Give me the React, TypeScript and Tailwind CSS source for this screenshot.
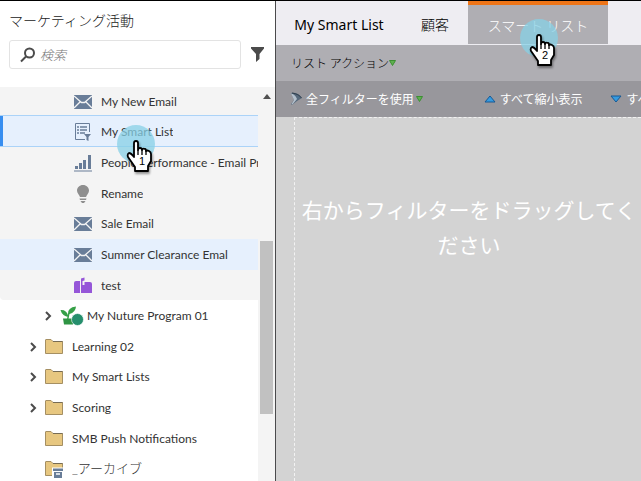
import React from "react";

type IconKind = "mail" | "list" | "chart" | "bulb" | "test" | "plant" | "folder" | "archive";

type Item = {
  label: string;
  icon: IconKind;
  depth: 1 | 2 | 3;
  expandable?: boolean;
  tight?: boolean;
  highlighted?: boolean;
  selected?: boolean;
};

const openItems: Item[] = [
  { label: "My Smart List", icon: "list", depth: 3, selected: true },
  { label: "People Performance - Email Programs", icon: "chart", depth: 3 },
  { label: "Rename", icon: "bulb", depth: 3, tight: true },
  { label: "Sale Email", icon: "mail", depth: 3 },
  { label: "Summer Clearance Emal", icon: "mail", depth: 3, highlighted: true },
  { label: "test", icon: "test", depth: 3, tight: true },
];

const otherItems: Item[] = [
  { label: "My Nuture Program 01", icon: "plant", depth: 2, expandable: true },
  { label: "Learning 02", icon: "folder", depth: 1, expandable: true, tight: true },
  { label: "My Smart Lists", icon: "folder", depth: 1, expandable: true },
  { label: "Scoring", icon: "folder", depth: 1, expandable: true },
  { label: "SMB Push Notifications", icon: "folder", depth: 1, tight: true },
  { label: "_アーカイブ", icon: "archive", depth: 1 },
];

function Folder() {
  return (
    <>
      <path d="M.5 15.5V2Q.5 1.500 1 1.500H6L8 3.500H17.500V15.500Z" fill="#e7c780" stroke="#a58f62" />
      <path d="M8 3.500H17.500" stroke="#776c54" />
    </>
  );
}

function TreeIcon({ kind }: { kind: IconKind }) {
  if (kind === "plant") {
    return (
      <svg width="24" height="20" viewBox="0 0 24 20" className="shrink-0" aria-hidden="true">
        <path d="M3 12.500H13V18.500H4Z" fill="#2f9444" />
        <path d="M.5 4Q6.500 3.500 8 9.500L8 11Q2 9.500 .5 4ZM8 8Q7.500 1.500 16 .5Q15.500 6.500 9.500 8L8.500 13H7Z" fill="#35a047" />
        <circle cx="17.500" cy="13.500" r="6" fill="#258e6c" stroke="#fff" strokeWidth=".6" />
      </svg>
    );
  }
  return (
    <svg width="18" height="18" viewBox="0 0 18 18" fill="none" className="shrink-0" aria-hidden="true">
      {kind === "mail" && (
        <>
          <rect y="2" width="18" height="14" fill="#697d98" />
          <path d="M0 3 7.500 9.500H10.500L18 3M0 15 6 9M18 15 12 9" stroke="#f4f4f4" strokeWidth="1.300" />
        </>
      )}
      {kind === "list" && (
        <>
          <path d="M15.500 9V.5H1.500V16.500H11" stroke="#697d98" />
          <path d="M3 4H5M3 7H5M3 10H5M6 4H13M6 7H13M6 10H11" stroke="#697d98" strokeWidth="1.600" />
          <path d="M10 11H17L14.500 14V18L12.500 17V14Z" fill="#697d98" />
        </>
      )}
      {kind === "chart" && (
        <path d="M1 12H4V15H1ZM5 9H8V15H5ZM9 6H12V15H9ZM14 1H17V15H14ZM0 16.500H18V17.500H0Z" fill="#697d98" />
      )}
      {kind === "bulb" && (
        <path d="M9 0C5.500 0 3 2.500 3 5.500C3 8 5 9.500 6 12H12C13 9.500 15 8 15 5.500C15 2.500 12.500 0 9 0ZM5.500 13.500H12.500L12 15H6ZM6.500 16H11.500L10 18H8Z" fill="#8e8e8e" />
      )}
      {kind === "test" && (
        <path d="M0 6Q0 4 2 4H6V16H0ZM7 5V1.500L10.500 .5V3.500L8.500 4V8H10.500V5H16Q18 5 18 7V16H7Z" fill="#9556d8" />
      )}
      {kind === "folder" && <Folder />}
      {kind === "archive" && (
        <>
          <Folder />
          <path d="M7 7.500H18V18H7Z" fill="#fff" />
          <path d="M8 8.500H18V11H8ZM9 12H17V18H9Z" fill="#697d98" />
          <path d="M11 14H15" stroke="#fff" strokeWidth="1.500" />
        </>
      )}
    </svg>
  );
}

const indents = { 1: "pl-[27px]", 2: "pl-[42px]", 3: "pl-[56px]" };

function TreeRow({ item }: { item: Item }) {
  const height = item.selected ? "h-8" : item.tight ? "h-[30px]" : "h-[31px]";
  const look = item.selected
    ? "border-y border-[#abd3f8] bg-[#e6f0fd] shadow-[inset_3px_0_0_#378ef0]"
    : item.highlighted
      ? "bg-[#e6f0fd]"
      : "";
  return (
    <li className={`flex ${height} ${look}`}>
      <button className={`flex min-w-0 flex-1 items-center pt-px text-left ${indents[item.depth]}`}>
        <span className="flex w-[18px] shrink-0">
          {item.expandable && (
            <svg width="12" height="12" viewBox="0 0 12 12" fill="none" aria-hidden="true">
              <path d="M4 2 8 6 4 10" stroke="#4b4b4b" strokeWidth="2" />
            </svg>
          )}
        </span>
        <TreeIcon kind={item.icon} />
        <span
          className={`overflow-hidden whitespace-nowrap ${item.icon === "plant" ? "ml-[3px]" : "ml-[9px]"} ${item.icon === "archive" ? "text-[13px] font-light" : ""}`}
        >
          {item.label}
        </span>
      </button>
    </li>
  );
}

function Pointer({ step, place }: { step: number; place: string }) {
  return (
    <div className={`pointer-events-none absolute size-[38px] rounded-full bg-[#87d0e6]/75 ${place}`}>
      <svg width="30" height="36" viewBox="0 0 30 36" className="absolute top-[15px] left-[9px] drop-shadow-[1px_2px_1px_#0006]" aria-hidden="true">
        <path
          d="M8 3Q8 1 10 1Q12 1 12 3V10Q12 8 14 8Q16 8 16 10Q17 8 19 9Q20 9 20 11Q21 10 23 11Q25 12 25 14V21L22 26V31H9V27L2 17Q1 14 3 13Q5 13 8 17Z"
          fill="#fff"
          stroke="#000"
          strokeWidth="1.800"
          strokeLinejoin="round"
        />
        <path d="M12 10V15M16 10V15M20 11V15" stroke="#000" strokeWidth="1.300" />
      </svg>
      <span className="absolute top-[30px] left-[22px] font-['Liberation_Sans',sans-serif] text-[11px] leading-3 text-black">{step}</span>
    </div>
  );
}

function MenuArrow() {
  return (
    <svg width="7" height="6" viewBox="0 0 7 6" aria-hidden="true">
      <path d="M.5 .5H6.500L3.500 5.500Z" fill="#5fb04f" stroke="#3c8f32" />
    </svg>
  );
}

function BlueArrow({ down }: { down?: boolean }) {
  return (
    <svg width="12" height="8" viewBox="0 0 12 8" className="shrink-0" aria-hidden="true">
      <path d={down ? "M1 1H11L6 7Z" : "M1 7H11L6 1Z"} fill="#369be0" stroke="#175994" />
    </svg>
  );
}

export default function App() {
  return (
    <div className="flex h-screen overflow-hidden border-t border-black bg-white font-['Noto_Sans','Noto_Sans_CJK_JP',sans-serif]">
      <aside className="flex w-[276px] shrink-0 flex-col border-r border-[#4a4a4c]">
        <header className="h-[86px] shrink-0 px-[9px] pt-[9px]">
          <h1 className="font-['Noto_Sans_CJK_JP',sans-serif] text-sm leading-5 font-light text-[#222]">マーケティング活動</h1>
          <div className="mt-[10px] flex items-center">
            <label className="flex h-[29px] w-[232px] items-center rounded-[3px] border border-[#e3e3e3] pl-[10px]">
              <svg width="16" height="16" viewBox="0 0 16 16" fill="none" aria-hidden="true">
                <circle cx="9.500" cy="6" r="4.500" stroke="#4b4b4b" strokeWidth="2" />
                <path d="M6 9.500 1 14.500" stroke="#4b4b4b" strokeWidth="2" />
              </svg>
              <input
                aria-label="検索"
                placeholder="検索"
                className="ml-1 w-40 bg-transparent font-['Noto_Sans_CJK_JP',sans-serif] text-[13px] leading-5 font-light italic outline-none placeholder:text-[#777]"
              />
            </label>
            <button aria-label="フィルター" className="ml-[9px]">
              <svg width="15" height="15" viewBox="0 0 15 15" aria-hidden="true">
                <path d="M1 0H14V1.500L9.500 7V12L6 15V7L1 1.500Z" fill="#4b4b4b" />
              </svg>
            </button>
          </div>
        </header>
        <div className="relative flex min-h-0 flex-1 overflow-hidden font-['Lato','Noto_Sans_CJK_JP',sans-serif] text-xs text-[#333]">
          <nav className="min-w-0 flex-1">
            <ul className="rounded-bl bg-[#f4f4f4]">
              <li className="flex h-7">
                <button className="flex items-center pt-px pl-[74px]">
                  <TreeIcon kind="mail" />
                  <span className="ml-[9px]">My New Email</span>
                </button>
              </li>
              {openItems.map((item) => (
                <TreeRow key={item.label} item={item} />
              ))}
            </ul>
            <ul>
              {otherItems.map((item) => (
                <TreeRow key={item.label} item={item} />
              ))}
            </ul>
          </nav>
          <div className="flex w-[17px] shrink-0 flex-col items-center bg-[#f4f4f4] pt-[7px]">
            <svg width="8" height="5" viewBox="0 0 8 5" aria-hidden="true">
              <path d="M4 0 8 5H0Z" fill="#505050" />
            </svg>
            <div className="mt-[142px] h-[173px] w-[13px] bg-[#c1c1c1]" />
          </div>
          <Pointer step={1} place="left-[117px] top-[38px]" />
        </div>
      </aside>

      <main className="flex min-w-0 flex-1 flex-col overflow-hidden bg-[#d3d3d3]">
        <nav className="relative flex h-11 shrink-0 bg-[#eeedf2] pb-px text-sm text-black">
          <button className="w-[126px] pt-[5px] text-center">My Smart List</button>
          <button className="w-[66px] pt-[5px] text-center font-light">顧客</button>
          <button className="w-[140px] border-t-4 border-[#ee7518] bg-[#afaeb3] text-center font-['Noto_Sans_CJK_JP',sans-serif] font-light text-white">
            スマート リスト
          </button>
          <Pointer step={2} place="left-[244px] top-[18px]" />
        </nav>
        <div className="flex h-9 shrink-0 items-center bg-[#afaeb3] pl-[15px] font-['Noto_Sans_CJK_JP',sans-serif] text-xs text-black">
          <button className="flex items-center font-light">
            リスト アクション
            <MenuArrow />
          </button>
        </div>
        <div className="flex h-9 shrink-0 items-center bg-[#98979c] pl-[14px] font-['Noto_Sans_CJK_JP',sans-serif] text-xs whitespace-nowrap text-white">
          <button className="flex items-center">
            <svg width="13" height="14" viewBox="0 0 13 14" className="mr-[3px]" aria-hidden="true">
              <path d="M1 1Q8 0 12 6L7 9 2 13 1 12 4 8Z" fill="#56687a" />
              <path d="M1 1.500Q5 2 7 7L2.500 12.500 1.500 12 4 8Z" fill="#b4c0cc" />
              <path d="M2 1Q9 2 11.500 6" stroke="#303f4e" fill="none" />
            </svg>
            全フィルターを使用
            <span className="ml-[2px]">
              <MenuArrow />
            </span>
          </button>
          <span className="ml-[30px] h-3 w-px bg-[#fff0df]" />
          <button className="ml-[31px] flex shrink-0 items-center gap-1">
            <BlueArrow />
            すべて縮小表示
          </button>
          <button className="ml-[28px] flex shrink-0 items-center gap-1">
            <BlueArrow down />
            すべて展開
          </button>
        </div>
        <section className="ml-[18px] flex-1 border-t border-l border-dashed border-[#f2f2f2] pt-[74px]">
          <p className="w-[348px] text-center font-['Noto_Sans_CJK_JP',sans-serif] text-[21px] leading-[35px] text-white">
            右からフィルターをドラッグしてく
            <br />
            ださい
          </p>
        </section>
      </main>
    </div>
  );
}
